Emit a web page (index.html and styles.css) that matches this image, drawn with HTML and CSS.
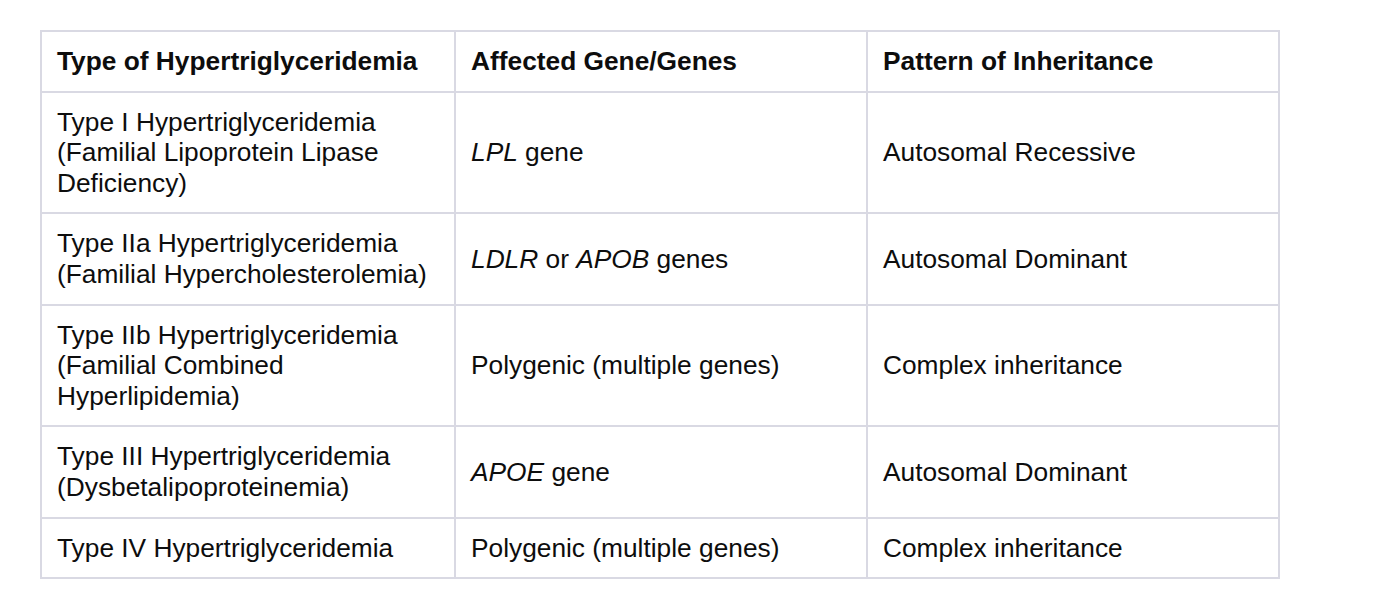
FILE: index.html
```html
<!DOCTYPE html>
<html>
<head>
<meta charset="utf-8">
<link rel="stylesheet" href="styles.css">
</head>
<body>
<div class="wrap">
<table class="grid">
  <colgroup><col class="c1"><col class="c2"><col class="c3"></colgroup>
  <thead>
    <tr><th>Type of Hypertriglyceridemia</th><th>Affected Gene/Genes</th><th>Pattern of Inheritance</th></tr>
  </thead>
  <tbody>
    <tr><td>Type I Hypertriglyceridemia (Familial Lipoprotein Lipase Deficiency)</td><td><em>LPL</em> gene</td><td>Autosomal Recessive</td></tr>
    <tr><td>Type IIa Hypertriglyceridemia (Familial Hypercholesterolemia)</td><td><em>LDLR</em> or <em>APOB</em> genes</td><td>Autosomal Dominant</td></tr>
    <tr><td>Type IIb Hypertriglyceridemia (Familial Combined Hyperlipidemia)</td><td>Polygenic (multiple genes)</td><td>Complex inheritance</td></tr>
    <tr><td>Type III Hypertriglyceridemia (Dysbetalipoproteinemia)</td><td><em>APOE</em> gene</td><td>Autosomal Dominant</td></tr>
    <tr><td>Type IV Hypertriglyceridemia</td><td>Polygenic (multiple genes)</td><td>Complex inheritance</td></tr>
  </tbody>
</table>
</div>
</body>
</html>
```
FILE: styles.css
```css
html, body { margin: 0; padding: 0; background: #fff; }
.wrap { padding: 30px 40px; }
.grid {
  border-collapse: collapse;
  table-layout: fixed;
  width: 1238px;
  font-family: "Liberation Sans", Arial, sans-serif;
  font-size: 26.3px;
  line-height: 30.6px;
  color: #0d0d0d;
}
.c1 { width: 414px; }
.c2 { width: 412px; }
.c3 { width: 412px; }
.grid th, .grid td {
  border: 2px solid #d9d9e3;
  padding: 14px 14px 14px 15px;
  text-align: left;
  vertical-align: middle;
}
.grid th { font-weight: bold; }
.grid em { font-style: italic; }
```
